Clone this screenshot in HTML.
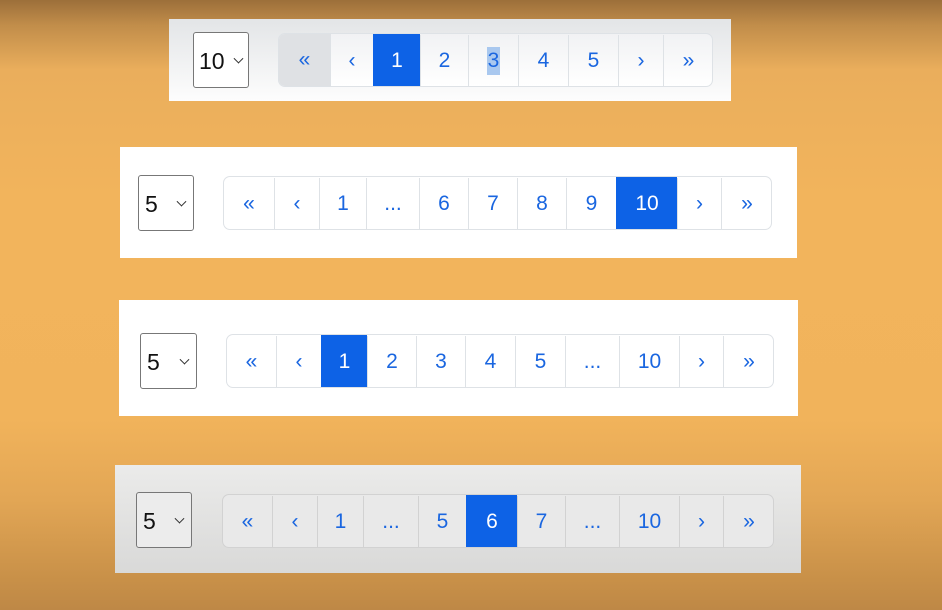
<!DOCTYPE html>
<html><head><style>
body{margin:0;width:942px;height:610px;overflow:hidden;position:relative;font-family:"Liberation Sans",sans-serif;
background:linear-gradient(180deg,#9c6f3a 0px,#c18d4a 25px,#eaae5c 70px,#f2b45c 200px,#f1b35b 420px,#e2a655 500px,#c89048 580px,#be8846 610px);}
.p{position:absolute;background:#fff;}
.s{position:absolute;border:1px solid #777;border-radius:3px;background:#fff;box-sizing:border-box;font-size:23px;color:#111;}
.s span{position:absolute;left:6px;top:50%;transform:translateY(-45%);}
.s i{position:absolute;right:8px;top:50%;width:6px;height:6px;border-right:1.5px solid #333;border-bottom:1.5px solid #333;transform:translateY(-70%) rotate(45deg);}
.g{position:absolute;border:1px solid #dee2e6;border-radius:7px;box-sizing:border-box;overflow:hidden;background:#fff;}
.c{position:absolute;top:1px;bottom:-1px;box-sizing:border-box;border-left:1px solid #dee2e6;display:flex;align-items:center;justify-content:center;color:#1a66e0;font-size:21px;}
.c.a{background:#0d62e6;color:#fff;border-color:#0d62e6;top:-1px;bottom:-1px;padding-top:2px}
#g4,#g4 .c{border-color:#d2d2d2}
#g4 .c.a{border-color:#0d62e6}
</style></head><body>
<div class="p" style="left:169px;top:19px;width:562px;height:82px;background:linear-gradient(#e3e5e7,#fdfdfd)"></div>
<div class="s" style="left:193px;top:32px;width:56px;height:56px"><span style="left:5px">10</span><i style="right:6px"></i></div>
<div class="g" id="g1" style="left:278px;top:33px;width:435px;height:54px;background:linear-gradient(#f1f2f4,#fff)"></div>
<div class="p" style="left:120px;top:147px;width:677px;height:111px"></div>
<div class="s" style="left:138px;top:175px;width:56px;height:56px"><span>5</span><i></i></div>
<div class="g" id="g2" style="left:223px;top:176px;width:549px;height:54px"></div>
<div class="p" style="left:119px;top:300px;width:679px;height:116px"></div>
<div class="s" style="left:140px;top:333px;width:57px;height:56px"><span>5</span><i></i></div>
<div class="g" id="g3" style="left:226px;top:334px;width:548px;height:54px"></div>
<div class="p" style="left:115px;top:465px;width:686px;height:108px;background:linear-gradient(#ebebea,#d9d9d8)"></div>
<div class="s" style="left:136px;top:492px;width:56px;height:56px;background:#ececec"><span>5</span><i></i></div>
<div class="g" id="g4" style="left:222px;top:494px;width:552px;height:54px;background:#e9e9e9"></div>
<script>
function b(id,x0,edges,labels,act,extra){var g=document.getElementById(id);
for(var i=0;i<labels.length;i++){var d=document.createElement('div');d.className='c'+(i==act?' a':'');
var l=edges[i]-x0-1;if(i==0)l=-1;d.style.left=l+'px';d.style.width=(edges[i+1]-edges[i]+(i==0?1:0))+'px';if(i==0)d.style.borderLeft='none';
d.textContent=labels[i];if(extra&&extra[i])d.style.cssText+=extra[i];g.appendChild(d);}}
b('g1',278,[278,330,373,420,468,518,568,618,663,713],['«','‹','1','2','3','4','5','›','»'],2,{0:'background:#dfe1e4;top:-1px'});
document.querySelectorAll('#g1 .c')[4].innerHTML='<span style="background:#a9c8ef;padding:2px 1px">3</span>';
b('g2',223,[223,274,319,366,419,468,517,566,616,677,721,772],['«','‹','1','...','6','7','8','9','10','›','»'],8);
b('g3',226,[226,276,321,367,416,465,515,565,619,679,723,774],['«','‹','1','2','3','4','5','...','10','›','»'],2);
b('g4',222,[222,272,317,363,418,466,517,565,619,679,723,774],['«','‹','1','...','5','6','7','...','10','›','»'],5);
</script>
</body></html>
